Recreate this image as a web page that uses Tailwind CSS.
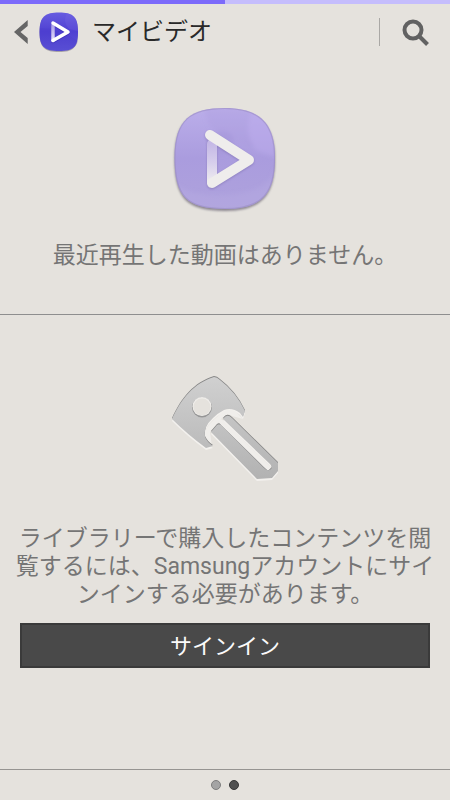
<!DOCTYPE html>
<html lang="ja">
<head>
<meta charset="utf-8">
<meta name="viewport" content="width=device-width, initial-scale=1">
<title>マイビデオ</title>
<script src="https://cdn.jsdelivr.net/npm/@tailwindcss/browser@4"></script>
</head>
<body class="flex min-h-screen flex-col bg-[#e5e2dd] font-[Roboto,'Noto_Sans_CJK_JP',sans-serif] text-[#757575]">
  <div class="flex h-1 bg-[#c5bdfc]"><div class="w-1/2 bg-[#7c6afa]"></div></div>
  <header class="flex h-14 items-center pl-3 pr-[18px]">
    <button type="button" aria-label="戻る" class="flex items-center">
      <svg class="h-6 w-4" viewBox="0 0 16 24" aria-hidden="true"><path d="M15.700 0v6L8.500 12l7.200 6v6L2 12z" fill="#666"/></svg>
    </button>
    <svg class="ml-2.5 h-11 w-11" viewBox="0 0 44 44" aria-hidden="true">
      <defs>
        <linearGradient id="logo" x1="0" y1="0" x2="0" y2="1"><stop offset="0" stop-color="#675ce0"/><stop offset=".5" stop-color="#4f40d2"/><stop offset="1" stop-color="#5e55d7"/></linearGradient>
        <linearGradient id="bar" gradientUnits="userSpaceOnUse" x1="0" y1="14" x2="0" y2="31"><stop offset="0" stop-color="#a79be8"/><stop offset="1" stop-color="#e8e1fc"/></linearGradient>
      </defs>
      <path d="M21 3.500C35 3.500 40 7 40 22.500S35 42 21 42 1.500 38 1.500 22.500 7 3.500 21 3.500z" fill="#8b8690" opacity=".7"/>
      <path d="M21 2.500C35 2.500 40 6.500 40 22S35 41 21 41 1.500 37.500 1.500 22 7 2.500 21 2.500z" fill="url(#logo)"/>
      <path d="M2 18Q20 17 40 31Q38 41 21 41Q4 41 2 29z" fill="#4438c9" opacity=".2"/>
      <path d="M29 3Q24 11 31 19L40 21Q40 6 29 3z" fill="#8073e8" opacity=".2"/>
      <g fill="none" stroke-linecap="round" stroke-linejoin="round" stroke-width="3.500">
        <path d="M15 14.500v17l15-8.500-15-9" stroke="#3427aa" opacity=".6"/>
        <path d="M15 14.500v16" stroke="url(#bar)"/>
        <path d="M15 30.500L30 22 15 13" stroke="#fff"/>
      </g>
    </svg>
    <h1 class="ml-2.5 text-2xl text-[#292929]">マイビデオ</h1>
    <div class="ml-auto h-7 w-px bg-[#aaa8a5]"></div>
    <button type="button" aria-label="検索" class="ml-5">
      <svg class="h-8 w-8" viewBox="0 0 32 32" fill="none" stroke="#626262" stroke-width="4" aria-hidden="true"><circle cx="13" cy="14" r="8.500"/><path d="M19 20l8.500 8.500"/></svg>
    </button>
  </header>

  <main class="flex grow flex-col">
    <section class="flex h-[255px] flex-col items-center border-b border-[#8e8e8e] pt-10">
      <svg class="h-[120px] w-[120px]" viewBox="0 0 120 120" aria-hidden="true">
        <defs>
          <linearGradient id="tile" x1="0" y1="0" x2="0" y2="1"><stop offset="0" stop-color="#bbaeea"/><stop offset=".5" stop-color="#aa9cde"/><stop offset="1" stop-color="#aea2dc"/></linearGradient>
          <linearGradient id="stem" gradientUnits="userSpaceOnUse" x1="0" y1="44" x2="0" y2="82"><stop offset="0" stop-color="#c5b9e6"/><stop offset=".5" stop-color="#d7cfec"/><stop offset="1" stop-color="#eeebef"/></linearGradient>
          <filter id="soft" filterUnits="userSpaceOnUse" x="0" y="0" width="120" height="120"><feGaussianBlur stdDeviation="1"/></filter>
          <filter id="blend" filterUnits="userSpaceOnUse" x="0" y="0" width="120" height="120"><feGaussianBlur stdDeviation="2"/></filter>
          <clipPath id="tileClip"><path d="M60 8C94 8 110 23 110 57.500S99 109 60 109 9.500 96 9.500 57.500 26 8 60 8z"/></clipPath>
        </defs>
        <path d="M60 10C94 10 110 25 110 59S99 111 60 111 9.500 98 9.500 59 26 10 60 10z" fill="#77717e" filter="url(#soft)" opacity=".8"/>
        <path d="M60 8C94 8 110 23 110 57.500S99 109 60 109 9.500 96 9.500 57.500 26 8 60 8z" fill="url(#tile)"/>
        <g clip-path="url(#tileClip)">
          <g filter="url(#blend)">
            <path d="M40 8Q40 30 62 38T110 55V8z" fill="#a998dd" opacity=".25"/>
            <path d="M88 8Q77 32 91 50L110 57V8z" fill="#c8b7f4" opacity=".3"/>
            <path d="M9 84Q32 99 70 94T110 67V110H9z" fill="#bbb0e4" opacity=".3"/>
            <circle cx="57" cy="43" r="12" fill="#9888d0" opacity=".25"/>
          </g>
          <path d="M60 8C94 8 110 23 110 57.500S99 109 60 109 9.500 96 9.500 57.500 26 8 60 8z" fill="none" stroke="#9688bd" stroke-width="2" opacity=".5"/>
        </g>
        <g fill="none" stroke-linecap="round" stroke-linejoin="round" stroke-width="10">
          <path d="M47 83V43M47 84l37-23-39-25" stroke="#776aa8" filter="url(#soft)" opacity=".55"/>
          <path d="M47 44v38" stroke="url(#stem)"/>
          <path d="M47 83l37-23-39-25" stroke="#efedec"/>
        </g>
      </svg>
      <p class="mt-[22px] text-[23px] leading-7">最近再生した動画はありません。</p>
    </section>

    <section class="flex flex-col items-center px-4 pt-[50px]">
      <svg class="h-[130px] w-[130px]" viewBox="0 0 130 130" aria-hidden="true">
        <defs>
          <linearGradient id="metal" gradientUnits="userSpaceOnUse" x1="0" y1="12" x2="0" y2="114"><stop offset="0" stop-color="#d0d0d0"/><stop offset="1" stop-color="#b2b2b2"/></linearGradient>
          <filter id="edge"><feGaussianBlur stdDeviation=".5"/></filter>
          <path id="head" d="M12 54C21 34 34 18 54 12Q57 12 60 15Q76 27 85 46L83 52L80 48Q72 42 64 45Q58 48 53 53Q43 62 45 72Q47 77 53 81L46 83Q27 69 12 54z"/>
          <path id="blade" d="M51 67L57 60Q60 58 63 62L104 103Q108 107 111 104Q113 102 110 99L63 54Q67 48 72 53L118 98V106L112 113L97 114z"/>
        </defs>
        <g fill="#f3f1ee" transform="translate(0 2)"><use href="#head"/><use href="#blade"/></g>
        <path d="M52 82Q43 75 45 67Q47 60 58 51Q65 42 75 46L83 54L72 51Q68 47 62 53L58 58L50 67z" fill="#f0eeeb"/>
        <path d="M61 57L108 103" stroke="#f0eeeb" stroke-width="5" stroke-linecap="round"/>
        <g fill="#858585" filter="url(#edge)" transform="translate(0 -1)"><use href="#head"/><use href="#blade"/></g>
        <g fill="url(#metal)"><use href="#head"/><use href="#blade"/></g>
        <path d="M62 58L108 103" stroke="#f0eeeb" stroke-width="4" stroke-linecap="round"/>
        <circle cx="42" cy="42.500" r="10" fill="#969696" filter="url(#edge)"/>
        <circle cx="42" cy="41.500" r="9.500" fill="#efedea"/>
        <circle cx="42" cy="42" r="8.500" fill="#e5e2dd"/>
      </svg>
      <p class="mt-[30px] text-center text-[23px] leading-7 whitespace-nowrap">ライブラリーで購入したコンテンツを閲<br>覧するには、Samsungアカウントにサイ<br>ンインする必要があります。</p>
      <div class="w-full px-1 pt-3.5">
        <button type="button" class="flex h-[45px] w-full items-center justify-center border-2 border-[#3a3a3a] bg-[#494949] pt-0.5 text-[22px] text-[#fafafa]">サインイン</button>
      </div>
    </section>
  </main>

  <footer class="flex h-[31px] items-center justify-center gap-2 border-t border-[#969491]">
    <button type="button" aria-label="ページ1" class="h-2.5 w-2.5 rounded-full border border-[#7d7d7d] bg-[#a4a4a4]"></button>
    <button type="button" aria-label="ページ2" aria-current="page" class="h-2.5 w-2.5 rounded-full border border-[#363636] bg-[#505050]"></button>
  </footer>
</body>
</html>
